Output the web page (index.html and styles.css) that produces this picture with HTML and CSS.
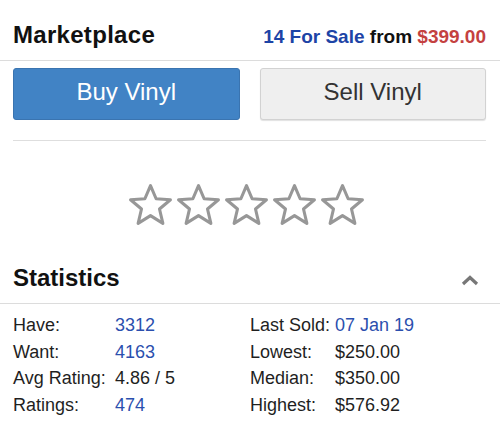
FILE: index.html
```html
<!DOCTYPE html>
<html lang="en">
<head>
    <meta charset="UTF-8">
    <meta name="viewport" content="width=device-width, initial-scale=1.0">
    <title>Marketplace</title>
    <link rel="stylesheet" href="styles.css">
</head>
<body>
    <div class="market-head">
        <h2 class="market-title">Marketplace</h2>
        <p class="for-sale"><a href="#">14 For Sale</a> from <span class="price">$399.00</span></p>
    </div>

    <div class="buttons">
        <button class="btn btn-buy">Buy Vinyl</button>
        <button class="btn btn-sell">Sell Vinyl</button>
    </div>
    <hr>

    <div class="stars">
        <svg viewBox="0 0 44 42"><polygon points="22,2.5 27.5,15.4 41.5,16.4 30.8,25.4 34.1,39.5 22,31.9 9.9,39.5 13.2,25.4 2.5,16.4 16.5,15.4"/></svg>
        <svg viewBox="0 0 44 42"><polygon points="22,2.5 27.5,15.4 41.5,16.4 30.8,25.4 34.1,39.5 22,31.9 9.9,39.5 13.2,25.4 2.5,16.4 16.5,15.4"/></svg>
        <svg viewBox="0 0 44 42"><polygon points="22,2.5 27.5,15.4 41.5,16.4 30.8,25.4 34.1,39.5 22,31.9 9.9,39.5 13.2,25.4 2.5,16.4 16.5,15.4"/></svg>
        <svg viewBox="0 0 44 42"><polygon points="22,2.5 27.5,15.4 41.5,16.4 30.8,25.4 34.1,39.5 22,31.9 9.9,39.5 13.2,25.4 2.5,16.4 16.5,15.4"/></svg>
        <svg viewBox="0 0 44 42"><polygon points="22,2.5 27.5,15.4 41.5,16.4 30.8,25.4 34.1,39.5 22,31.9 9.9,39.5 13.2,25.4 2.5,16.4 16.5,15.4"/></svg>
    </div>

    <div class="stats-head">
        <h2>Statistics</h2>
        <svg class="chevron" viewBox="0 0 18 11"><polyline points="2,9 9,2.5 16,9"/></svg>
    </div>

    <div class="stats">
        <span>Have:</span><a href="#">3312</a>
        <span>Last Sold:</span><a href="#">07 Jan 19</a>
        <span>Want:</span><a href="#">4163</a>
        <span>Lowest:</span><span>$250.00</span>
        <span>Avg Rating:</span><span>4.86 / 5</span>
        <span>Median:</span><span>$350.00</span>
        <span>Ratings:</span><a href="#">474</a>
        <span>Highest:</span><span>$576.92</span>
    </div>
</body>
</html>
```

FILE: styles.css
```css
* {
  margin: 0;
  padding: 0;
  box-sizing: border-box;
}
body {
  background-color: white;
  font-family: "Liberation Sans", Arial, sans-serif;
  color: #1a1a1a;
}
a {
  text-decoration: none;
}
h2 {
  font-size: 24px;
  line-height: 28px;
  font-weight: bold;
  color: #111;
}
.market-title {
  letter-spacing: 0.3px;
}

/* Marketplace header */
.market-head {
  display: flex;
  justify-content: space-between;
  align-items: baseline;
  height: 61px;
  padding: 21px 14px 0 13px;
  border-bottom: 1px solid #dcdcdc;
}
.for-sale {
  font-size: 19px;
  font-weight: bold;
  color: #111;
}
.for-sale a {
  color: #1d44a6;
}
.for-sale .price {
  color: #c4413f;
}

/* Buy / Sell */
.buttons {
  display: grid;
  grid-template-columns: 1fr 1fr;
  gap: 20px;
  padding: 7px 14px 0 13px;
}
.btn {
  height: 52px;
  border-radius: 3px;
  font-family: "Liberation Sans", Arial, sans-serif;
  font-size: 24px;
  padding-bottom: 4px;
  cursor: pointer;
}
.btn-buy {
  background-color: #4183c5;
  border: 1px solid #3a74b0;
  color: white;
}
.btn-sell {
  background-color: #efefef;
  border: 1px solid #d2d2d2;
  box-shadow: 0 1px 1px rgba(0, 0, 0, 0.12);
  color: #333;
}
hr {
  border: 0;
  border-top: 1px solid #dedede;
  margin: 20px 14px 0 13px;
}

/* Rating */
.stars {
  display: flex;
  justify-content: center;
  gap: 3px;
  padding: 42px 8px 0 0;
  height: 123px;
}
.stars svg {
  width: 45px;
  height: 43px;
}
.stars polygon {
  fill: none;
  stroke: #979797;
  stroke-width: 3;
  stroke-linejoin: round;
}

/* Statistics */
.stats-head {
  display: flex;
  justify-content: space-between;
  align-items: center;
  padding: 0 21px 11px 13px;
  border-bottom: 1px solid #dcdcdc;
}
.chevron {
  width: 18px;
  height: 11px;
  margin-top: 5px;
}
.chevron polyline {
  fill: none;
  stroke: #777;
  stroke-width: 3.2;
}
.stats {
  display: grid;
  grid-template-columns: 102px 135px 85px auto;
  padding: 8px 14px 0 13px;
  font-size: 18px;
  line-height: 26.7px;
  color: #1f1f1f;
}
.stats a {
  color: #2b4fae;
}
```
